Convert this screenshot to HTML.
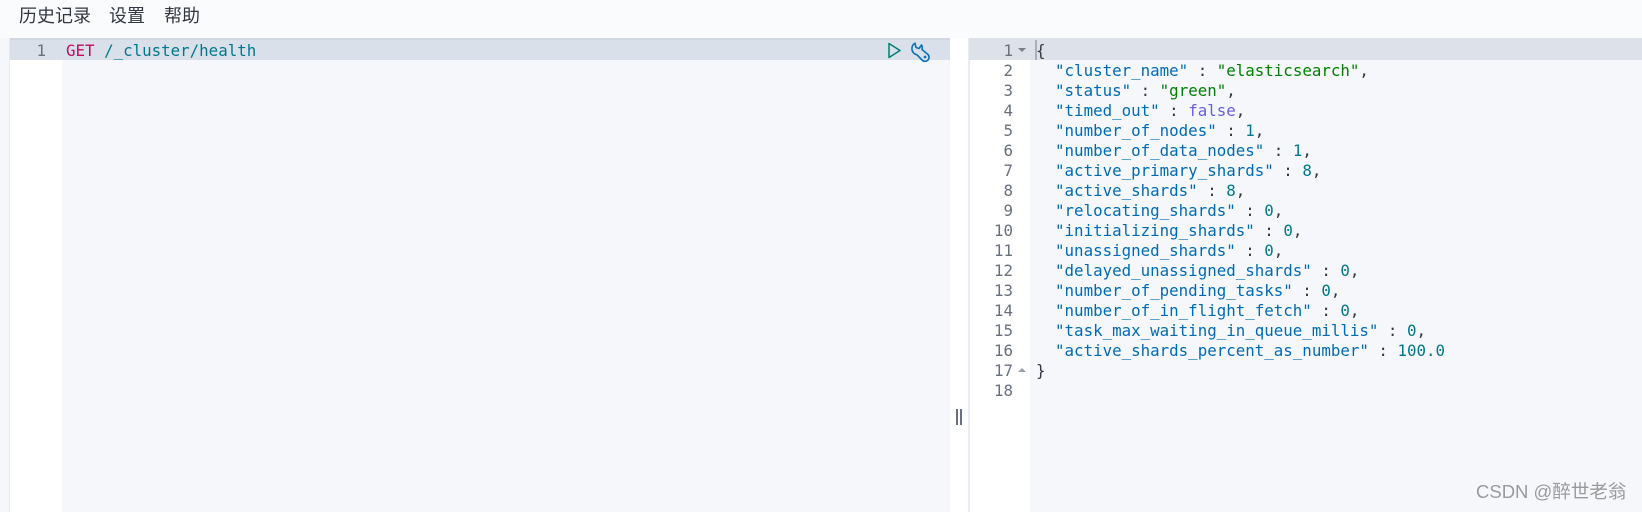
<!DOCTYPE html>
<html><head><meta charset="utf-8"><style>
html,body{margin:0;padding:0;width:1642px;height:512px;overflow:hidden;background:#f5f7fb}
.a{position:absolute}
.m{font:15.8px/20px "DejaVu Sans Mono",monospace;white-space:pre}
.n{color:#69707d;text-align:right}
.t{font:18px/24px 'Liberation Sans','Noto Sans CJK SC',sans-serif;color:#343741;white-space:pre;top:4px}
.k{color:#006bb4}.s{color:#017d73}.g{color:#008000}.b{color:#6a5de0}.p{color:#343741}.v{color:#00788c}
</style></head><body>
<div class="a" style="left:0;top:0;width:1642px;height:38px;background:#fafbfd"></div>
<div class="a t" style="left:19px">历史记录</div>
<div class="a t" style="left:109px">设置</div>
<div class="a t" style="left:164px">帮助</div>

<div class="a" style="left:9px;top:38px;width:1px;height:474px;background:#e6e9f0"></div>
<div class="a" style="left:10px;top:60px;width:52px;height:452px;background:#fff"></div>
<div class="a" style="left:10px;top:38px;width:940px;height:22px;background:#d9e0e9"></div>
<div class="a" style="left:10px;top:38px;width:940px;height:2px;background:#d0d6e2"></div>
<div class="a m n" style="left:10px;top:41px;width:36px">1</div>
<div class="a m" style="left:66px;top:41px"><span style="color:#c80a68">GET</span> <span style="color:#00788c">/_cluster/health</span></div>
<svg class="a" style="left:880px;top:40px" width="54" height="24" viewBox="0 0 54 24" fill="none">
<path d="M9 3.500V17.500L20 10.500Z" stroke="#017d73" stroke-width="1.500" stroke-linejoin="round"/>
<path d="M35 3.200A6.300 6.300 0 0 0 37 14.800L42 20A4 4 0 0 0 48 14.500L42 9.500A6 6 0 0 0 41.500 5L39 8.500L36 7.500Z" stroke="#0f74b8" stroke-width="1.700" stroke-linejoin="round"/>
<circle cx="45" cy="17" r="1.400" fill="#0f74b8"/>
</svg>

<div class="a" style="left:950px;top:38px;width:18px;height:474px;background:#fff"></div>
<div class="a" style="left:956px;top:409px;width:2px;height:16px;background:#6a7080"></div>
<div class="a" style="left:960px;top:409px;width:2px;height:16px;background:#6a7080"></div>
<div class="a" style="left:968px;top:38px;width:2px;height:474px;background:#e9ecf4"></div>
<div class="a" style="left:970px;top:60px;width:60px;height:452px;background:#fff"></div>
<div class="a" style="left:969px;top:38px;width:673px;height:22px;background:#dde2ea"></div>
<div class="a" style="left:1035px;top:40px;width:2px;height:20px;background:#a8b0bd"></div>
<div class="a m n" style="left:970px;top:41px;width:43px">1
2
3
4
5
6
7
8
9
10
11
12
13
14
15
16
17
18</div>
<svg class="a" style="left:1017px;top:47px" width="10" height="6"><path d="M1 1H9L5 5Z" fill="#7a7f89"/></svg>
<svg class="a" style="left:1017px;top:367px" width="10" height="6"><path d="M1 5H9L5 1Z" fill="#9a9fa8"/></svg>
<div class="a m p" style="left:1036px;top:41px">{
  <span class="k">"cluster_name"</span> : <span class="g">"elasticsearch"</span>,
  <span class="k">"status"</span> : <span class="g">"green"</span>,
  <span class="k">"timed_out"</span> : <span class="b">false</span>,
  <span class="k">"number_of_nodes"</span> : <span class="v">1</span>,
  <span class="k">"number_of_data_nodes"</span> : <span class="v">1</span>,
  <span class="k">"active_primary_shards"</span> : <span class="v">8</span>,
  <span class="k">"active_shards"</span> : <span class="v">8</span>,
  <span class="k">"relocating_shards"</span> : <span class="v">0</span>,
  <span class="k">"initializing_shards"</span> : <span class="v">0</span>,
  <span class="k">"unassigned_shards"</span> : <span class="v">0</span>,
  <span class="k">"delayed_unassigned_shards"</span> : <span class="v">0</span>,
  <span class="k">"number_of_pending_tasks"</span> : <span class="v">0</span>,
  <span class="k">"number_of_in_flight_fetch"</span> : <span class="v">0</span>,
  <span class="k">"task_max_waiting_in_queue_millis"</span> : <span class="v">0</span>,
  <span class="k">"active_shards_percent_as_number"</span> : <span class="v">100.0</span>
}</div>
<div class="a" style="left:1476px;top:480px;font:18.500px/24px 'Liberation Sans','Noto Sans CJK SC',sans-serif;color:#9a9a9a;white-space:pre">CSDN @醉世老翁</div>
</body></html>
